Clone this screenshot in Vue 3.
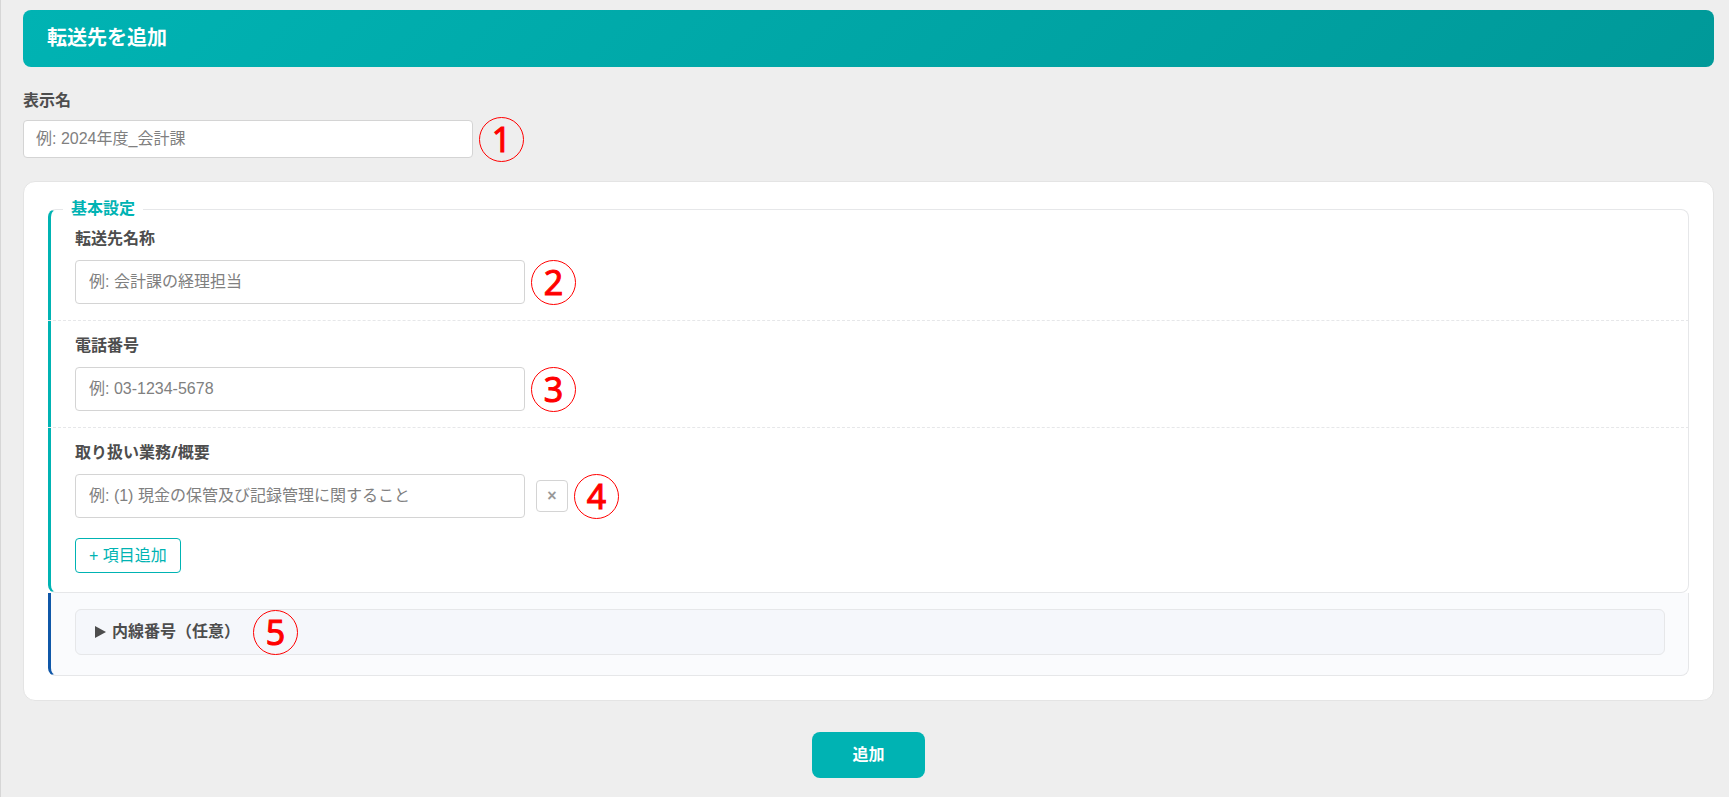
<script setup>
import { ref } from 'vue'

const displayName = ref('')
const fields = ref([
  { id: 'dest-name', label: '転送先名称', placeholder: '例: 会計課の経理担当', step: 2, value: '' },
  { id: 'dest-phone', label: '電話番号', placeholder: '例: 03-1234-5678', step: 3, value: '' },
])
const tasks = ref([{ value: '' }])
</script>

<template>
  <main class="page">
    <header class="banner">
      <h1>転送先を追加</h1>
    </header>

    <form @submit.prevent>
      <label class="label" for="display-name">表示名</label>
      <div class="row">
        <input id="display-name" v-model="displayName" class="text compact" type="text" placeholder="例: 2024年度_会計課" />
        <span class="step">1</span>
      </div>

      <div class="card">
        <fieldset class="basic">
          <legend>基本設定</legend>
          <div v-for="f in fields" :key="f.id" class="field">
            <label class="label" :for="f.id">{{ f.label }}</label>
            <div class="row">
              <input :id="f.id" v-model="f.value" class="text" type="text" :placeholder="f.placeholder" />
              <span class="step">{{ f.step }}</span>
            </div>
          </div>
          <div class="field">
            <label class="label" for="task-0">取り扱い業務/概要</label>
            <div v-for="(t, i) in tasks" :key="i" class="row">
              <input :id="`task-${i}`" v-model="t.value" class="text" type="text" placeholder="例: (1) 現金の保管及び記録管理に関すること" />
              <button class="remove" type="button" aria-label="削除">×</button>
              <span class="step">4</span>
            </div>
            <button class="add" type="button">+ 項目追加</button>
          </div>
        </fieldset>

        <section class="extension">
          <details>
            <summary>
              <svg class="arrow" viewBox="0 0 11 12" aria-hidden="true"><path d="M0 0L11 6L0 12Z" /></svg>
              <span>内線番号（任意）</span>
              <span class="step">5</span>
            </summary>
          </details>
        </section>
      </div>

      <div class="actions">
        <button class="submit" type="submit">追加</button>
      </div>
    </form>
  </main>
</template>

<style>
body {
  margin: 0;
  background: #eeeeee;
}
</style>

<style scoped>
.page,
.page * {
  box-sizing: border-box;
}
.page {
  min-height: 100vh;
  padding: 10px 15px 16px 22px;
  border-left: 1px solid #d6d6d6;
  background: #eeeeee;
  color: #4d4d4d;
  font-family: "Liberation Sans", "Noto Sans CJK JP", sans-serif;
  font-size: 16px;
  line-height: 24px;
}
input,
button {
  font: inherit;
}
.banner {
  padding: 16px 24px 17px;
  margin-bottom: 21px;
  border-radius: 8px;
  background: linear-gradient(135deg, #00b3b3, #009999);
  color: #fff;
}
h1 {
  margin: 0;
  font-size: 20px;
  line-height: 24px;
  font-weight: 700;
}
.label {
  display: block;
  width: fit-content;
  margin-bottom: 8px;
  font-family: "Noto Sans", "Noto Sans CJK JP", sans-serif;
  font-weight: 700;
}
.row {
  display: flex;
  align-items: center;
}
.text {
  width: 450px;
  height: 44px;
  padding: 0 13px;
  border: 1px solid #d4d4d4;
  border-radius: 4px;
  background: #fff;
  color: #333;
}
.text::placeholder {
  color: #808080;
  opacity: 1;
}
.compact {
  height: 38px;
  padding: 0 12px;
}
.step {
  display: flex;
  flex: none;
  align-items: center;
  justify-content: center;
  width: 45px;
  height: 45px;
  margin: -4px 0 -4px 6px;
  border: 1px solid #ff0000;
  border-radius: 50%;
  color: #ff0000;
  font-family: "Noto Sans", sans-serif;
  font-size: 34px;
  font-weight: 400;
  line-height: 34px;
  -webkit-text-stroke: 1px #ff0000;
}
.card {
  margin-top: 23px;
  padding: 15px 24px 24px 24px;
  border: 1px solid #e4e4e4;
  border-radius: 12px;
  background: #fff;
}
.basic {
  min-width: 0;
  margin: 0;
  padding: 0;
  border: 1px solid #e6e7e9;
  border-left: 3px solid #00b3b3;
  border-radius: 8px;
}
legend {
  margin-left: 12px;
  padding: 0 8px;
  color: #00b3b3;
  font-weight: 700;
}
.field {
  margin: 0 -1px 0 -3px;
  padding: 12px 24px 16px 27px;
  border-bottom: 1px dashed #e6e7e9;
}
.field:first-of-type {
  padding-top: 5px;
}
.field:last-child {
  padding-bottom: 19px;
  border-bottom: 0;
}
.field .label {
  margin-bottom: 10px;
}
.remove {
  width: 32px;
  height: 32px;
  margin-left: 11px;
  padding: 0;
  border: 1px solid #d4d4d4;
  border-radius: 4px;
  background: #fff;
  color: #999;
  font-weight: 700;
}
.add {
  display: block;
  height: 35px;
  margin-top: 20px;
  padding: 0 13px;
  border: 1px solid #00b3b3;
  border-radius: 4px;
  background: #fff;
  color: #00b3b3;
}
.extension {
  padding: 16px 23px 20px 24px;
  border-right: 1px solid #e6e7e9;
  border-bottom: 1px solid #e6e7e9;
  border-left: 3px solid #0f57a8;
  border-radius: 0 0 8px 8px;
  background: #fafbfd;
}
details {
  border: 1px solid #e6e7e9;
  border-radius: 6px;
  background: #f5f7fb;
}
summary {
  display: flex;
  align-items: center;
  min-height: 44px;
  padding: 0 19px;
  font-weight: 700;
  list-style: none;
  cursor: pointer;
}
summary .step {
  margin-left: 13px;
}
.arrow {
  width: 11px;
  height: 12px;
  margin-right: 6px;
  fill: #4d4d4d;
}
.actions {
  display: flex;
  justify-content: center;
  margin-top: 31px;
}
.submit {
  height: 46px;
  padding: 0 40px;
  border: 0;
  border-radius: 8px;
  background: #00b3b3;
  color: #fff;
  font-weight: 700;
}
</style>
